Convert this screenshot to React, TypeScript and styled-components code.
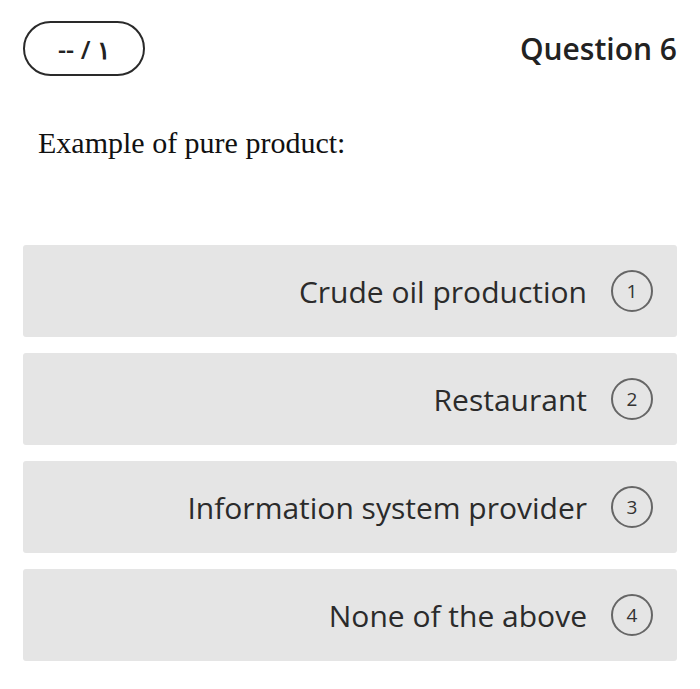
import React from 'react'
import styled, { createGlobalStyle } from 'styled-components'

const GlobalStyle = createGlobalStyle`
body {
  margin: 0;
  background: #fff;
}
`

const Page = styled.div`
width: 700px;
height: 689px;
box-sizing: border-box;
padding: 21px 23px 0 23px;
background: #fff;
`

const TopBar = styled.div`
display: flex;
justify-content: space-between;
align-items: center;
`

const Pill = styled.div`
width: 122px;
height: 55px;
box-sizing: border-box;
border: 2px solid #2a2a2a;
border-radius: 28px;
display: flex;
align-items: center;
justify-content: center;
font-family: "Open Sans", sans-serif;
font-size: 25px;
font-weight: 600;
letter-spacing: 1px;
color: #222;
`

const Title = styled.div`
font-family: "Open Sans", sans-serif;
font-size: 30px;
font-weight: 600;
color: #222;
margin-top: -1px;
`

const Prompt = styled.div`
font-family: "Liberation Serif", serif;
font-size: 30px;
color: #111;
margin: 50px 0 0 15px;
`

const Options = styled.div`
display: flex;
flex-direction: column;
gap: 16px;
margin-top: 85px;
`

const Option = styled.div`
height: 92px;
background: #e5e5e5;
border-radius: 3px;
display: flex;
align-items: center;
justify-content: flex-end;
padding-right: 24px;
gap: 24px;
`

const Label = styled.span`
font-family: "Open Sans", sans-serif;
font-size: 30px;
color: #2b2b2b;
`

const Num = styled.span`
width: 42px;
height: 42px;
box-sizing: border-box;
border: 2px solid #666;
border-radius: 50%;
display: flex;
align-items: center;
justify-content: center;
font-family: "Open Sans", sans-serif;
font-size: 19px;
color: #333;
`

const answers = [
  'Crude oil production',
  'Restaurant',
  'Information system provider',
  'None of the above',
]

export default function App() {
  return (
    <Page>
      <GlobalStyle />
      <TopBar>
        <Pill>-- / ١</Pill>
        <Title>Question 6</Title>
      </TopBar>
      <Prompt>Example of pure product:</Prompt>
      <Options>
        {answers.map((a, i) => (
          <Option key={a}>
            <Label>{a}</Label>
            <Num>{i + 1}</Num>
          </Option>
        ))}
      </Options>
    </Page>
  )
}
